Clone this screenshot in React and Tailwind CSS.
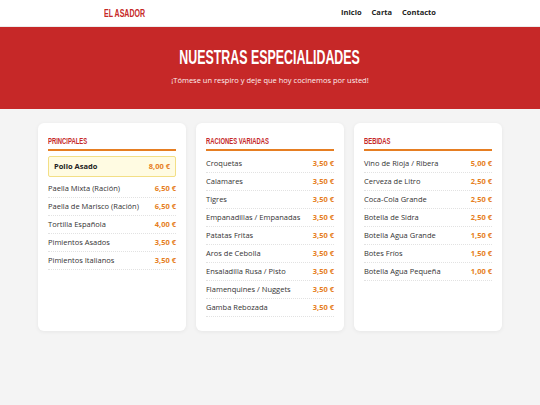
const principales = [
    ['Paella Mixta (Ración)', '6,50 €'],
    ['Paella de Marisco (Ración)', '6,50 €'],
    ['Tortilla Española', '4,00 €'],
    ['Pimientos Asados', '3,50 €'],
    ['Pimientos Italianos', '3,50 €'],
];

const raciones = [
    ['Croquetas', '3,50 €'],
    ['Calamares', '3,50 €'],
    ['Tigres', '3,50 €'],
    ['Empanadillas / Empanadas', '3,50 €'],
    ['Patatas Fritas', '3,50 €'],
    ['Aros de Cebolla', '3,50 €'],
    ['Ensaladilla Rusa / Pisto', '3,50 €'],
    ['Flamenquines / Nuggets', '3,50 €'],
    ['Gamba Rebozada', '3,50 €'],
];

const bebidas = [
    ['Vino de Rioja / Ribera', '5,00 €'],
    ['Cerveza de Litro', '2,50 €'],
    ['Coca-Cola Grande', '2,50 €'],
    ['Botella de Sidra', '2,50 €'],
    ['Botella Agua Grande', '1,50 €'],
    ['Botes Fríos', '1,50 €'],
    ['Botella Agua Pequeña', '1,00 €'],
];

// no condensed face installed, so squeeze Liberation Sans horizontally
const condensed = "font-['Liberation_Sans',sans-serif] font-bold inline-block";

function Row({ name, price }) {
    return (
        <li className="flex h-[18px] items-center justify-between border-b border-dotted border-[#e2e2e2] pt-px">
            <span className="text-[7.5px] text-[#333]">{name}</span>
            <span className="text-[7.5px] font-bold text-[#e67e22]">{price}</span>
        </li>
    );
}

function MenuCard({ title, items, featured }) {
    return (
        <div className="rounded-[6px] bg-white px-[10px] pt-[11px] pb-[14px] shadow-[0_1px_4px_rgba(0,0,0,0.06)]">
            <div className="flex h-[17px] items-start border-b-2 border-[#e67e22] pt-px">
                <h2
                    className={`${condensed} origin-left scale-x-[0.62] text-[9.5px] leading-[12px] text-[#c62828]`}
                >
                    {title}
                </h2>
            </div>
            <ul className="mt-[4px]">
                {featured && (
                    <li className="mt-[5px] mb-[3px] flex h-[21px] items-center justify-between rounded-[2px] border border-[#f3df86] bg-[#fffbe2] px-[5px]">
                        <span className="text-[7.5px] font-bold text-[#222]">{featured[0]}</span>
                        <span className="text-[7.5px] font-bold text-[#e67e22]">{featured[1]}</span>
                    </li>
                )}
                {items.map(([name, price]) => (
                    <Row key={name} name={name} price={price} />
                ))}
            </ul>
        </div>
    );
}

export default function App() {
    return (
        <div className="min-h-[405px] bg-[#f4f4f4] font-['Open_Sans',sans-serif]">
            {/* Header */}
            <header className="h-[27px] border-b border-[#ececec] bg-white">
                <div className="mx-auto flex h-full w-[332px] items-center justify-between">
                    <span
                        className={`${condensed} origin-left scale-x-[0.64] text-[11px] text-[#c62828]`}
                    >
                        EL ASADOR
                    </span>
                    <nav className="flex gap-[10px] text-[7.5px] font-bold text-[#222]">
                        <a>Inicio</a>
                        <a>Carta</a>
                        <a>Contacto</a>
                    </nav>
                </div>
            </header>

            {/* Hero */}
            <section className="flex h-[82px] flex-col items-center bg-[#c62828] pt-[17px] text-white">
                <h1
                    className={`${condensed} scale-x-[0.62] text-[20px] leading-[26px]`}
                >
                    NUESTRAS ESPECIALIDADES
                </h1>
                <p className="mt-[5px] text-[7.5px] text-[#fdf0f0]">
                    ¡Tómese un respiro y deje que hoy cocinemos por usted!
                </p>
            </section>

            {/* Menu */}
            <main className="mx-auto mt-[14px] grid w-[464px] grid-cols-3 gap-[10px]">
                <MenuCard
                    title="PRINCIPALES"
                    items={principales}
                    featured={['Pollo Asado', '8,00 €']}
                />
                <MenuCard title="RACIONES VARIADAS" items={raciones} />
                <MenuCard title="BEBIDAS" items={bebidas} />
            </main>
        </div>
    );
}
